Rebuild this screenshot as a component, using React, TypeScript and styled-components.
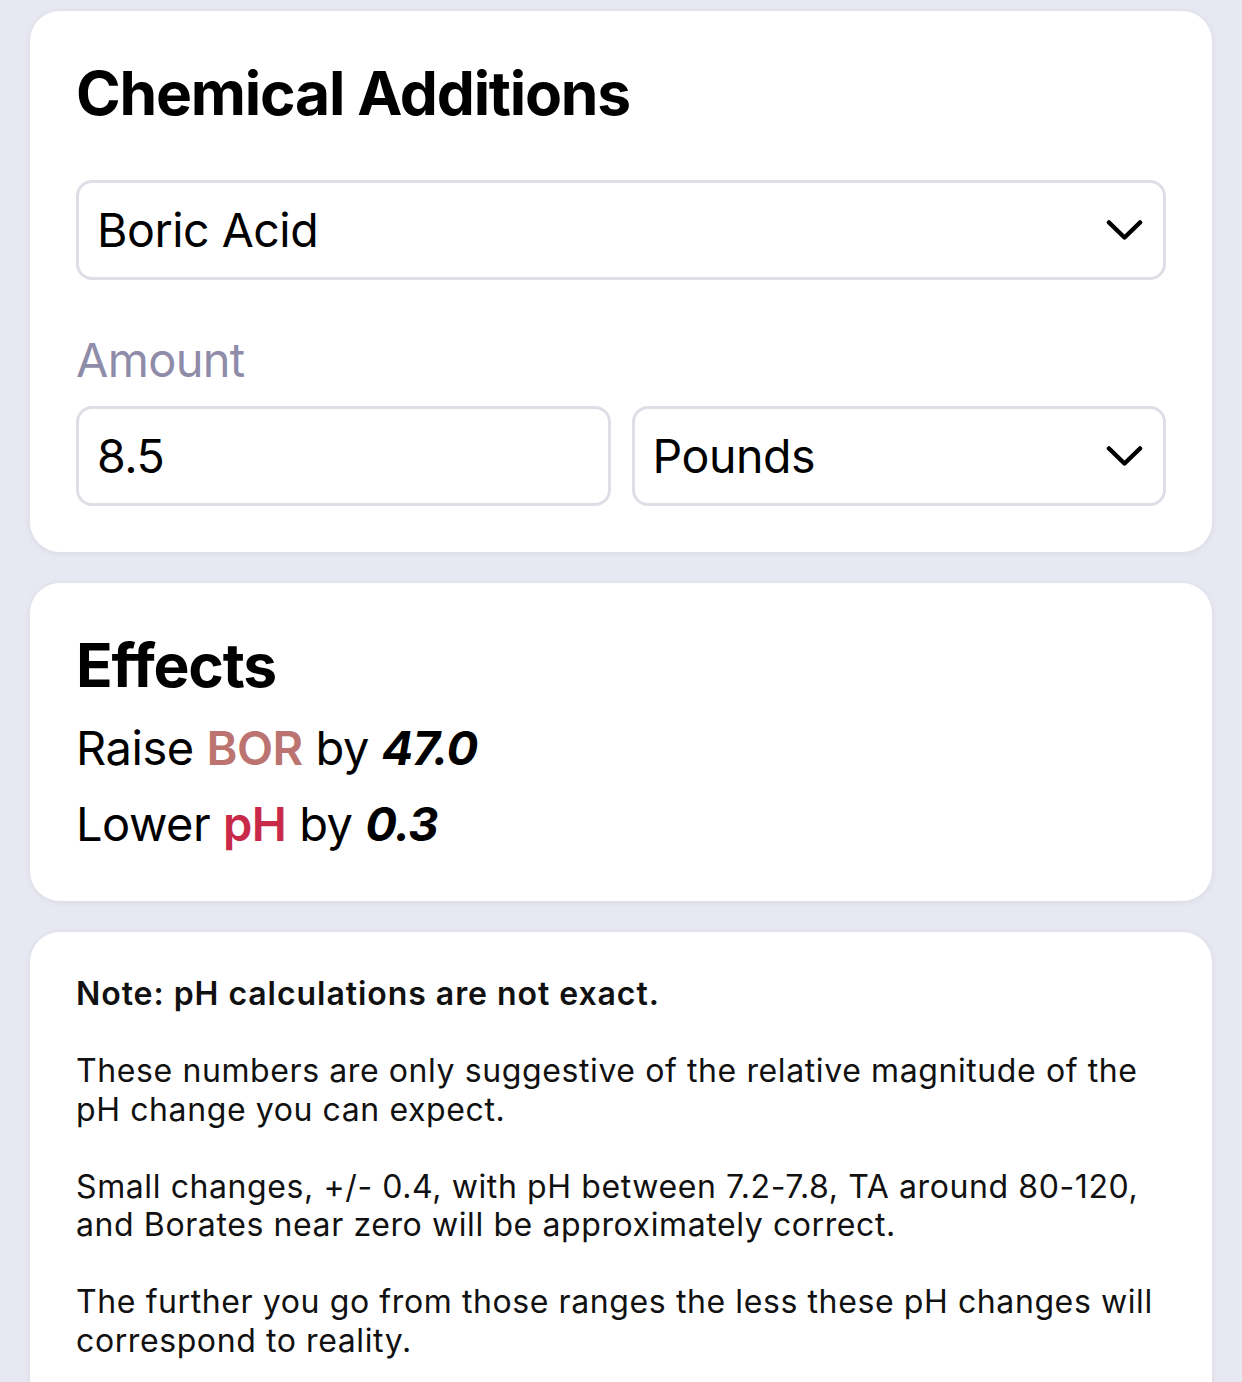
import styled, { createGlobalStyle } from "styled-components";

const GlobalStyle = createGlobalStyle`
  html, body {
    margin: 0;
    padding: 0;
    background: #e8e8f2;
  }
  body {
    font-family: Inter, "Liberation Sans", Arial, sans-serif;
    color: #000;
    -webkit-font-smoothing: antialiased;
  }
  * {
    box-sizing: border-box;
  }
`;

const Page = styled.main`
  display: flex;
  flex-direction: column;
  gap: 31px;
  padding: 11px 30px 40px;
`;

const Card = styled.section`
  background: #fff;
  border-radius: 30px;
  padding: 46px 46px 46px;
  box-shadow: 0 1px 6px rgba(40, 40, 80, 0.08);
`;

const Title = styled.h2`
  margin: 0;
  font-size: 60.5px;
  line-height: 72px;
  font-weight: 700;
  letter-spacing: -0.02em;
`;

const SelectBox = styled.div<{ $top?: number }>`
  display: flex;
  align-items: center;
  justify-content: space-between;
  height: 100px;
  margin-top: ${(p) => p.$top ?? 0}px;
  padding: 0 20px 0 18px;
  border: 3px solid #dedee6;
  border-radius: 16px;
  font-size: 46.5px;
  letter-spacing: -0.01em;
`;

const Label = styled.div`
  margin-top: 51px;
  margin-bottom: 18px;
  font-size: 47px;
  line-height: 57px;
  color: #8f8ca9;
  letter-spacing: -0.015em;
`;

const Row = styled.div`
  display: grid;
  grid-template-columns: 1fr 1fr;
  gap: 21px;
`;

const AmountInput = styled.input`
  height: 100px;
  width: 100%;
  padding: 0 18px;
  border: 3px solid #dedee6;
  border-radius: 16px;
  font-family: inherit;
  font-size: 46.5px;
  color: #000;
  outline: none;
  letter-spacing: -0.01em;
`;

const EffectList = styled.div`
  margin-top: 9px;
`;

const EffectLine = styled.div`
  font-size: 47px;
  line-height: 76px;
  letter-spacing: -0.01em;
`;

const Chem = styled.span<{ $color: string }>`
  font-weight: 600;
  color: ${(p) => p.$color};
`;

const Amount = styled.em`
  font-weight: 700;
  font-style: italic;
  letter-spacing: -0.02em;
`;

const EffectsCard = styled(Card)`
  padding-bottom: 39px;
`;

const NoteCard = styled(Card)`
  padding-top: 43px;
  padding-bottom: 60px;
`;

const Para = styled.p<{ $bold?: boolean }>`
  margin: 0 0 38.5px;
  font-size: 32px;
  line-height: 38.5px;
  font-weight: ${(p) => (p.$bold ? 600 : 400)};
  letter-spacing: ${(p) => (p.$bold ? "0.95px" : "0.6px")};
  color: #111;
`;

const Chevron = () => (
  <svg width="38" height="22" viewBox="0 0 38 22" fill="none">
    <path
      d="M4 3.5 L19.5 18.5 L35 3.5"
      stroke="#000"
      strokeWidth="4.5"
      strokeLinecap="round"
      strokeLinejoin="round"
    />
  </svg>
);

const Select = ({ value, top }: { value: string; top?: number }) => (
  <SelectBox $top={top}>
    <span>{value}</span>
    <Chevron />
  </SelectBox>
);

export default function App() {
  return (
    <>
      <GlobalStyle />
      <Page>
        <Card>
          <Title>Chemical Additions</Title>
          <Select value="Boric Acid" top={51} />
          <Label>Amount</Label>
          <Row>
            <AmountInput value="8.5" readOnly />
            <Select value="Pounds" />
          </Row>
        </Card>

        <EffectsCard>
          <Title>Effects</Title>
          <EffectList>
            <EffectLine>
              Raise <Chem $color="#bb746f">BOR</Chem> by <Amount>47.0</Amount>
            </EffectLine>
            <EffectLine>
              Lower <Chem $color="#c92a4a">pH</Chem> by <Amount>0.3</Amount>
            </EffectLine>
          </EffectList>
        </EffectsCard>

        <NoteCard>
          <Para $bold>Note: pH calculations are not exact.</Para>
          <Para>
            These numbers are only suggestive of the relative magnitude of the
            pH change you can expect.
          </Para>
          <Para>
            Small changes, +/- 0.4, with pH between 7.2-7.8, TA around 80-120,
            and Borates near zero will be approximately correct.
          </Para>
          <Para>
            The further you go from those ranges the less these pH changes will
            correspond to reality.
          </Para>
        </NoteCard>
      </Page>
    </>
  );
}
